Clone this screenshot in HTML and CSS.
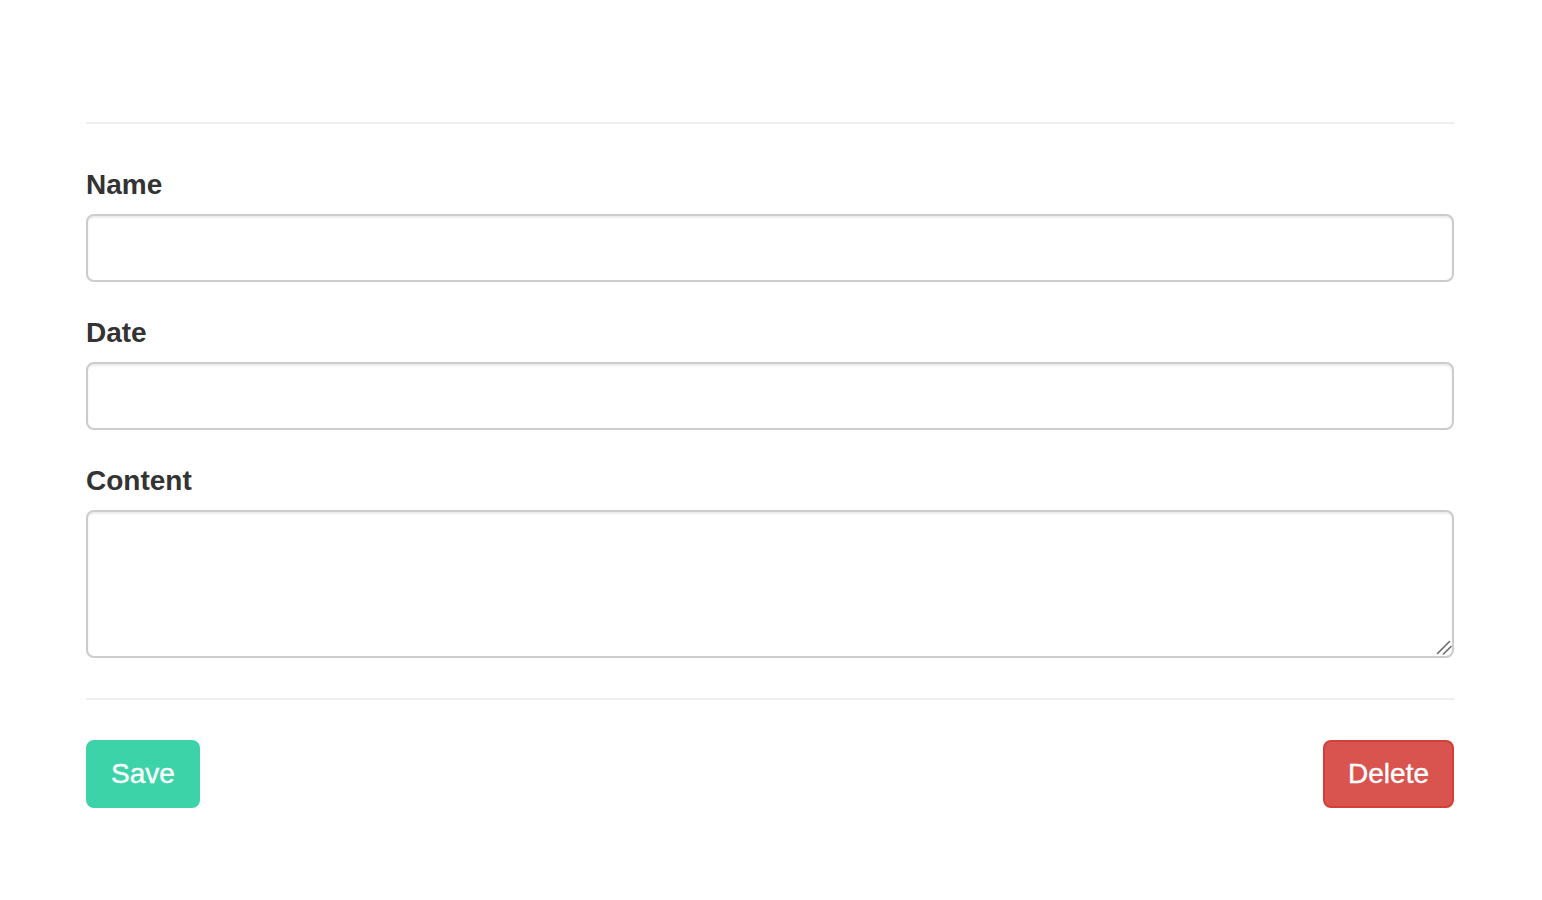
FILE: index.html
```html
<!DOCTYPE html>
<html>
<head>
<meta charset="utf-8">
<link rel="stylesheet" href="styles.css">
</head>
<body>
<div class="page">
  <hr class="rule">
  <form class="form">
    <div class="group">
      <label class="label">Name</label>
      <input class="control" type="text">
    </div>
    <div class="group">
      <label class="label">Date</label>
      <input class="control" type="text">
    </div>
    <div class="group last">
      <label class="label">Content</label>
      <div class="area-wrap">
        <textarea class="control area" rows="3"></textarea>
        <svg class="grip" width="16" height="16" viewBox="0 0 16 16">
          <path d="M1.5 14.5 L13.5 2.5 M7.5 15 L15 7.5" stroke="#6b6b6b" stroke-width="1.6" stroke-linecap="round" fill="none"/>
        </svg>
      </div>
    </div>
    <hr class="rule">
    <div class="actions">
      <button type="button" class="btn save">Save</button>
      <button type="button" class="btn delete">Delete</button>
    </div>
  </form>
</div>
</body>
</html>
```

FILE: styles.css
```css
html, body {
  margin: 0;
  padding: 0;
  background: #fff;
}
body {
  font-family: "Liberation Sans", Arial, Helvetica, sans-serif;
  font-size: 28px;
  line-height: 40px;
  color: #333;
}
.page {
  width: 1368px;
  margin: 0 0 0 86px;
  padding-top: 82px;
}
.rule {
  border: 0;
  border-top: 2px solid #eee;
  margin: 40px 0;
  height: 0;
}
.form {
  margin: 0;
}
.group {
  margin-bottom: 30px;
}
.group.last {
  margin-bottom: 0;
}
.label {
  display: block;
  font-weight: bold;
  margin-bottom: 10px;
  height: 40px;
  line-height: 42px;
}
.control {
  display: block;
  box-sizing: border-box;
  width: 100%;
  height: 68px;
  padding: 12px 24px;
  font-family: inherit;
  font-size: 28px;
  line-height: 40px;
  color: #555;
  background: #fff;
  border: 2px solid #ccc;
  border-radius: 8px;
  box-shadow: inset 0 2px 2px rgba(0,0,0,0.075);
  outline: none;
  margin: 0;
}
.area-wrap {
  position: relative;
}
.area {
  height: 148px;
  resize: none;
}
.grip {
  position: absolute;
  right: 2px;
  bottom: 3px;
  pointer-events: none;
}
.actions {
  display: flex;
  justify-content: space-between;
  align-items: center;
}
.btn {
  box-sizing: border-box;
  height: 68px;
  padding: 12px 23px;
  font-family: inherit;
  font-size: 28px;
  line-height: 40px;
  color: #fff;
  border: 2px solid transparent;
  border-radius: 8px;
  cursor: pointer;
  -webkit-text-stroke: 0.4px #fff;
}
.save {
  background: #3cd3a8;
  border-color: #3cd3a8;
}
.delete {
  background: #d9534f;
  border-color: #d43f3a;
}
```
